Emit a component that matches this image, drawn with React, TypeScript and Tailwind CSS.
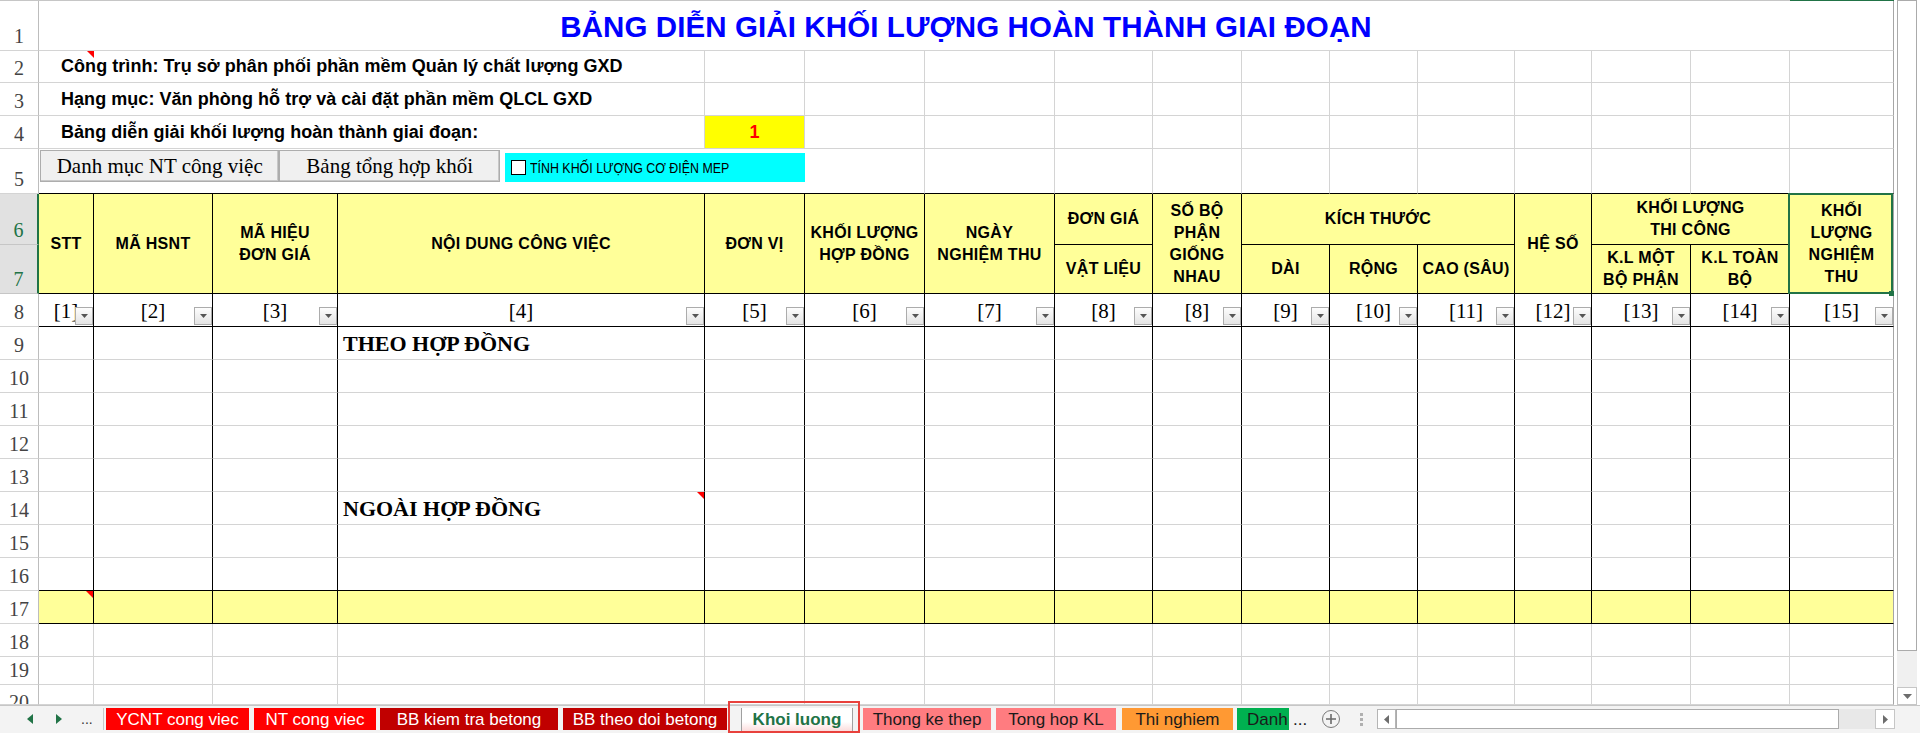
import React from "react";

const serif = "font-['Liberation_Serif','Times_New_Roman',serif]";
const GRID_COLS =
  "grid-cols-[39px_55px_119px_125px_367px_100px_120px_130px_98px_89px_88px_88px_97px_77px_99px_99px_104px]";
const GRID_ROWS =
  "grid-rows-[50px_32px_33px_33px_45px_51px_49px_33px_33px_33px_33px_33px_33px_33px_33px_33px_33px_33px_28px_20px]";

const LABELS8 = ["[1]", "[2]", "[3]", "[4]", "[5]", "[6]", "[7]", "[8]", "[8]", "[9]", "[10]", "[11]", "[12]", "[13]", "[14]", "[15]"];

function RowHead({ n, active, cut }: { n: number; active?: boolean; cut?: boolean }) {
  return (
    <div
      className={`flex justify-center border-b text-[20px] leading-none ${serif} ${
        cut ? "items-start pt-[7px] overflow-hidden" : "items-end pb-[4px]"
      } ${
        active
          ? "bg-[#e1e1e1] text-[#217346] border-r-2 border-r-[#217346] border-b-[#c6c6c6]"
          : "text-[#444] border-r border-r-[#bdbdbd] border-b-[#d4d4d4]"
      }`}
    >
      {n}
    </div>
  );
}

function Blank({ bottomBlack }: { bottomBlack?: boolean }) {
  return (
    <div
      className={`border-r border-b border-r-[#d4d4d4] ${bottomBlack ? "border-b-black" : "border-b-[#d4d4d4]"}`}
    />
  );
}

function H({ children, className = "" }: { children?: React.ReactNode; className?: string }) {
  return (
    <div
      className={`flex items-center justify-center text-center bg-[#ffff99] border-b border-b-black font-bold text-[16px] leading-[22px] tracking-[0.3px] ${className}`}
    >
      {children}
    </div>
  );
}

function Marker({ className = "right-0" }: { className?: string }) {
  return (
    <span className={`absolute top-0 w-[7px] h-[7px] bg-[#ff0000] [clip-path:polygon(0_0,100%_0,100%_100%)] ${className}`} />
  );
}

function FilterBtn() {
  return (
    <div className="absolute right-0 bottom-[1px] z-10 flex h-[18px] w-[18px] items-center justify-center border border-[#acacac] bg-linear-to-b from-[#fdfdfd] to-[#e4e4e4]">
      <svg width="7" height="4" viewBox="0 0 7 4">
        <path d="M0 0H7L3.5 4Z" fill="#555" />
      </svg>
    </div>
  );
}

function bodyCls(r: number, c: number) {
  const last = c === 15;
  if (r <= 16) {
    return `relative border-r border-b ${last ? "border-r-[#a6a6a6]" : "border-r-black"} ${
      r === 16 ? "border-b-black" : "border-b-[#d4d4d4]"
    }`;
  }
  if (r === 17) {
    return `relative bg-[#ffff99] border-r border-b border-b-black ${last ? "border-r-[#a6a6a6]" : "border-r-black"}`;
  }
  return `border-r border-b ${last ? "border-r-[#a6a6a6]" : "border-r-[#d4d4d4]"} border-b-[#d4d4d4]`;
}

function bodyContent(r: number, c: number) {
  if (c === 3 && (r === 9 || r === 14)) {
    return (
      <>
        <div className={`flex h-full items-center pl-[5px] pt-[1px] text-[22px] font-bold leading-none whitespace-nowrap ${serif}`}>
          {r === 9 ? "THEO HỢP ĐỒNG" : "NGOÀI HỢP ĐỒNG"}
        </div>
        {r === 14 && <Marker />}
      </>
    );
  }
  if (c === 0 && r === 17) return <Marker />;
  return null;
}

function Sheet() {
  const rows = [9, 10, 11, 12, 13, 14, 15, 16, 17, 18, 19, 20];
  return (
    <div className={`grid ${GRID_COLS} ${GRID_ROWS}`}>
      {/* row 1 */}
      <RowHead n={1} />
      <div className="col-span-16 flex items-center justify-center border-b border-r border-b-[#d4d4d4] border-r-[#a6a6a6] pt-[3px]">
        <span className="text-[29.5px] font-bold leading-none tracking-[0.1px] text-[#0000ff]">
          BẢNG DIỄN GIẢI KHỐI LƯỢNG HOÀN THÀNH GIAI ĐOẠN
        </span>
      </div>

      {/* rows 2-4 */}
      {["Công trình: Trụ sở phân phối phần mềm Quản lý chất lượng GXD", "Hạng mục: Văn phòng hỗ trợ và cài đặt phần mềm QLCL GXD", "Bảng diễn giải khối lượng hoàn thành giai đoạn:"].map(
        (text, i) => (
          <React.Fragment key={i}>
            <RowHead n={i + 2} />
            <div className="relative col-span-4 flex items-center whitespace-nowrap border-b border-r border-[#d4d4d4] pl-[22px] text-[18px] font-bold tracking-[0.05px]">
              {text}
              {i === 0 && <Marker className="left-[48px]" />}
            </div>
            {i === 2 ? (
              <div className="flex items-center justify-center border-b border-r border-[#d4d4d4] bg-[#ffff00] text-[18px] font-bold text-[#ff0000]">
                1
              </div>
            ) : (
              <Blank />
            )}
            {Array.from({ length: 10 }, (_, k) => (
              <Blank key={k} />
            ))}
            <div className="border-b border-r border-b-[#d4d4d4] border-r-[#a6a6a6]" />
          </React.Fragment>
        )
      )}

      {/* row 5 */}
      <RowHead n={5} />
      <div className="col-span-5 flex items-start border-b border-b-black pt-[1px]">
        <button
          type="button"
          className={`ml-[1px] flex h-[32px] w-[240px] items-center justify-center border border-[#adadad] bg-[#f0f0f0] text-[21px] leading-none shadow-[inset_-1px_-1px_0_#c8c8c8] ${serif}`}
        >
          Danh mục NT công việc
        </button>
        <button
          type="button"
          className={`flex h-[32px] w-[221px] items-center justify-center border border-[#adadad] bg-[#f0f0f0] text-[21px] leading-none shadow-[inset_-1px_-1px_0_#c8c8c8] ${serif}`}
        >
          Bảng tổng hợp khối
        </button>
        <div className="relative z-10 ml-[5px] mt-[3px] flex h-[29px] w-[300px] shrink-0 items-center bg-[#00ffff]">
          <span className="ml-[6px] h-[15px] w-[15px] shrink-0 border border-black bg-white" />
          <span className="ml-[4px] inline-block origin-left scale-x-[0.8] whitespace-nowrap text-[15.5px] leading-none">
            TÍNH KHỐI LƯỢNG CƠ ĐIỆN MEP
          </span>
        </div>
      </div>
      {Array.from({ length: 10 }, (_, k) => (
        <Blank key={k} bottomBlack />
      ))}
      <div className="border-b border-r border-b-black border-r-[#a6a6a6]" />

      {/* rows 6-7 header */}
      <RowHead n={6} active />
      <H className="row-span-2 border-r border-r-black">STT</H>
      <H className="row-span-2 border-r border-r-black">MÃ HSNT</H>
      <H className="row-span-2 border-r border-r-black">
        MÃ HIỆU
        <br />
        ĐƠN GIÁ
      </H>
      <H className="row-span-2 border-r border-r-black">NỘI DUNG CÔNG VIỆC</H>
      <H className="row-span-2 border-r border-r-black">ĐƠN VỊ</H>
      <H className="row-span-2 border-r border-r-black">
        KHỐI LƯỢNG
        <br />
        HỢP ĐỒNG
      </H>
      <H className="row-span-2 border-r border-r-black">
        NGÀY
        <br />
        NGHIỆM THU
      </H>
      <H className="border-r border-r-black">ĐƠN GIÁ</H>
      <H className="row-span-2 border-r border-r-black">
        SỐ BỘ
        <br />
        PHẬN
        <br />
        GIỐNG
        <br />
        NHAU
      </H>
      <H className="col-span-3 border-r border-r-black">KÍCH THƯỚC</H>
      <H className="row-span-2 border-r border-r-black">HỆ SỐ</H>
      <H className="col-span-2 border-r border-r-black">
        KHỐI LƯỢNG
        <br />
        THI CÔNG
      </H>
      <H className="relative row-span-2 border-r border-r-[#a6a6a6]">
        KHỐI
        <br />
        LƯỢNG
        <br />
        NGHIỆM
        <br />
        THU
        <span className="absolute -left-[2px] -top-[1px] -bottom-[1px] right-0 z-20 border-2 border-[#217346]" />
        <span className="absolute -bottom-[3px] right-[-1px] z-30 h-[5px] w-[5px] bg-[#217346]" />
      </H>
      <RowHead n={7} active />
      <H className="border-r border-r-black">VẬT LIỆU</H>
      <H className="border-r border-r-black">DÀI</H>
      <H className="border-r border-r-black">RỘNG</H>
      <H className="border-r border-r-black">CAO (SÂU)</H>
      <H className="border-r border-r-black">
        K.L MỘT
        <br />
        BỘ PHẬN
      </H>
      <H className="border-r border-r-black">
        K.L TOÀN
        <br />
        BỘ
      </H>

      {/* row 8 */}
      <RowHead n={8} />
      {LABELS8.map((t, i) => (
        <div
          key={i}
          className={`relative flex items-center justify-center border-b border-r border-b-black ${
            i === 15 ? "border-r-[#a6a6a6]" : "border-r-black"
          } text-[21px] leading-none ${serif}`}
        >
          <span className="pt-[3px]">{t}</span>
          <FilterBtn />
        </div>
      ))}

      {/* rows 9-20 */}
      {rows.map((r) => (
        <React.Fragment key={r}>
          <RowHead n={r} cut={r === 20} />
          {Array.from({ length: 16 }, (_, c) => (
            <div key={c} className={bodyCls(r, c)}>
              {bodyContent(r, c)}
            </div>
          ))}
        </React.Fragment>
      ))}
    </div>
  );
}

function VScroll() {
  return (
    <div className="flex w-[26px] flex-col bg-white pl-[3px] pr-[3px]">
      <div className="h-[651px] border border-[#ababab] bg-white" />
      <div className="flex-1 bg-[#f0f0f0]" />
      <div className="flex h-[18px] items-center justify-center border border-[#c6c6c6] bg-white">
        <svg width="9" height="5" viewBox="0 0 9 5">
          <path d="M0 0H9L4.5 5Z" fill="#6d6d6d" />
        </svg>
      </div>
    </div>
  );
}

const TABS = [
  { label: "YCNT cong viec", cls: "ml-[2px] w-[143px] bg-[#ff0000] text-white" },
  { label: "NT cong viec", cls: "ml-[5px] w-[122px] bg-[#ff0000] text-white" },
  { label: "BB kiem tra betong", cls: "ml-[4px] w-[178px] bg-[#c00000] text-white" },
  { label: "BB theo doi betong", cls: "ml-[5px] w-[164px] bg-[#c00000] text-white" },
];
const TABS2 = [
  { label: "Thong ke thep", cls: "ml-[3px] w-[128px] bg-[#ff7c80] text-[#1a1a1a]" },
  { label: "Tong hop KL", cls: "ml-[5px] w-[120px] bg-[#ff7c80] text-[#1a1a1a]" },
  { label: "Thi nghiem", cls: "ml-[6px] w-[111px] bg-[#ff9933] text-[#1a1a1a]" },
];

function TabBar() {
  return (
    <div className="flex h-[28px] items-start border-t border-[#c6c6c6] bg-[#f3f3f3] pt-[2px] text-[17px]">
      <div className="flex h-[22px] w-[104px] shrink-0 items-center border-r border-[#c8c8c8]">
        <svg className="ml-[27px]" width="6" height="10" viewBox="0 0 6 10">
          <path d="M6 0L0 5L6 10Z" fill="#217346" />
        </svg>
        <svg className="ml-[23px]" width="6" height="10" viewBox="0 0 6 10">
          <path d="M0 0L6 5L0 10Z" fill="#217346" />
        </svg>
        <span className="ml-[19px] text-[14px] leading-none text-[#333]">...</span>
      </div>
      {TABS.map((t) => (
        <div key={t.label} className={`flex h-[22px] shrink-0 items-center justify-center whitespace-nowrap leading-none ${t.cls}`}>
          {t.label}
        </div>
      ))}
      <div className="relative ml-[1px] h-[22px] w-[132px] shrink-0">
        <div className="ml-[13px] flex h-[23px] w-[112px] items-center justify-center border-x border-[#a0a0a0] bg-linear-to-b from-white from-60% to-[#fbdcdc] font-bold leading-none text-[#217346]">
          Khoi luong
        </div>
        <span className="absolute left-0 top-[-7px] h-[32px] w-[132px] border-2 border-[#e8413c]" />
      </div>
      {TABS2.map((t) => (
        <div key={t.label} className={`flex h-[22px] shrink-0 items-center justify-center whitespace-nowrap leading-none ${t.cls}`}>
          {t.label}
        </div>
      ))}
      <div className="ml-[4px] flex h-[22px] w-[52px] shrink-0 items-center whitespace-nowrap bg-[#00b050] pl-[10px] leading-none text-[#1a1a1a]">
        Danh
      </div>
      <span className="ml-[4px] flex h-[22px] w-[18px] shrink-0 items-center leading-none text-[#1a1a1a]">...</span>
      <div className="ml-[11px] mt-[2px] flex h-[18px] w-[18px] shrink-0 items-center justify-center rounded-full border-[1.5px] border-[#7a7a7a]">
        <svg width="10" height="10" viewBox="0 0 10 10">
          <path d="M5 0V10M0 5H10" stroke="#6a6a6a" strokeWidth="1.6" />
        </svg>
      </div>
      <div className="ml-[20px] mt-[5px] flex h-[13px] w-[3px] shrink-0 flex-col justify-between">
        <span className="h-[3px] w-[3px] bg-[#b0b0b0]" />
        <span className="h-[3px] w-[3px] bg-[#b0b0b0]" />
        <span className="h-[3px] w-[3px] bg-[#b0b0b0]" />
      </div>
      <div className="ml-[14px] mt-[1px] flex h-[20px] w-[518px] shrink-0 items-stretch">
        <div className="flex w-[19px] items-center justify-center border border-[#b5b5b5] bg-white">
          <svg width="5" height="9" viewBox="0 0 5 9">
            <path d="M5 0L0 4.5L5 9Z" fill="#6d6d6d" />
          </svg>
        </div>
        <div className="w-[443px] border border-[#ababab] bg-white" />
        <div className="w-[36px] bg-[#e8e8e8]" />
        <div className="flex w-[20px] items-center justify-center border border-[#c6c6c6] bg-white">
          <svg width="5" height="9" viewBox="0 0 5 9">
            <path d="M0 0L5 4.5L0 9Z" fill="#6d6d6d" />
          </svg>
        </div>
      </div>
    </div>
  );
}

export default function App() {
  return (
    <div className="flex h-[733px] w-[1920px] flex-col overflow-hidden bg-white font-['Liberation_Sans',Arial,sans-serif] text-black">
      <div className="flex h-[705px] shrink-0">
        <div className="flex w-[1894px] flex-col">
          <div className="flex h-px shrink-0">
            <div className="w-[1790px] bg-[#c6c6c6]" />
            <div className="w-[104px] bg-[#217346]" />
          </div>
          <Sheet />
        </div>
        <VScroll />
      </div>
      <TabBar />
    </div>
  );
}
